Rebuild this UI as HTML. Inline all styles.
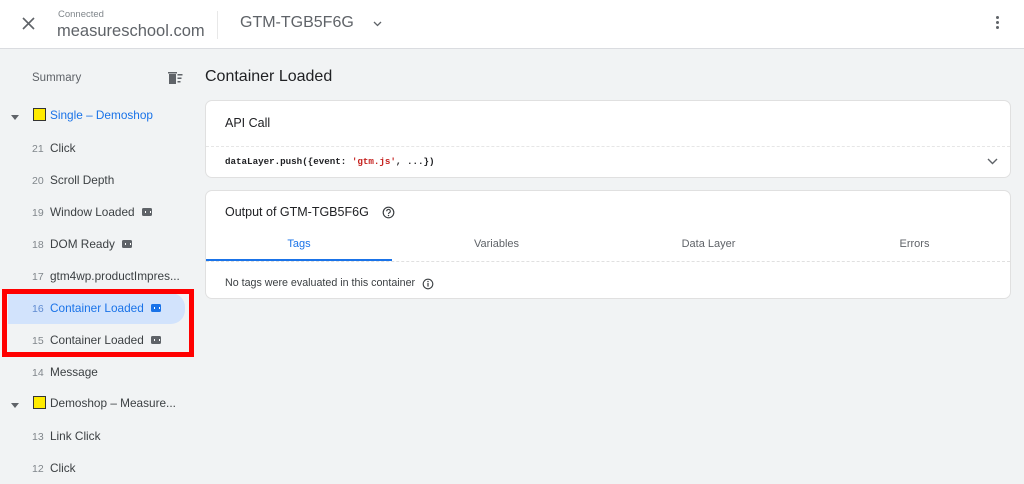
<!DOCTYPE html>
<html><head><meta charset="utf-8"><style>
*{box-sizing:border-box;margin:0;padding:0}
body{width:1024px;height:484px;overflow:hidden;background:#f1f3f4;font-family:"Liberation Sans",Arial,sans-serif;color:#3c4043;position:relative}
.hdr{position:absolute;left:0;top:0;width:1024px;height:49px;background:#fff;border-bottom:1px solid #dadce0}
.abs{position:absolute;white-space:nowrap}
.item{position:absolute;left:32px;font-size:11.8px;color:#5f6368;white-space:nowrap}
.item .n{color:#80868b;font-size:10.5px;display:inline-block;width:18px}
.item .t{color:#3c4043}
.badge{display:inline-block;width:10px;height:8px;background:#5f6368;border-radius:1.5px;vertical-align:middle;margin-left:7px;position:relative;top:-1px}
.badge:after{content:"";position:absolute;left:3px;top:3px;width:4px;height:2px;border-left:1px solid #fff;border-right:1px solid #fff}
.card{position:absolute;left:205px;width:806px;background:#fff;border:1px solid #e0e0e0;border-radius:7px}
.sq{display:inline-block;width:13px;height:13px;background:#ffeb00;border:1px solid #333;vertical-align:middle;margin-right:4px;position:relative;top:-1px}
.tri{position:absolute;left:11px;width:0;height:0;border-left:4px solid transparent;border-right:4px solid transparent;border-top:5px solid #5f6368}
</style></head><body>
<div class="hdr">
  <svg class="abs" style="left:22px;top:17px" width="13" height="13" viewBox="0 0 13 13"><path d="M1 1L12 12M12 1L1 12" stroke="#5f6368" stroke-width="1.6"/></svg>
  <div class="abs" style="left:58px;top:9px;font-size:9.5px;color:#80868b">Connected</div>
  <div class="abs" style="left:57px;top:22px;font-size:16.5px;color:#5f6368">measureschool.com</div>
  <div class="abs" style="left:217px;top:11px;width:1px;height:28px;background:#e8e8e8"></div>
  <div class="abs" style="left:240px;top:14px;font-size:16px;color:#5f6368">GTM-TGB5F6G</div>
  <svg class="abs" style="left:373px;top:21px" width="9" height="6" viewBox="0 0 9 6"><path d="M1 1L4.5 4.5L8 1" stroke="#5f6368" stroke-width="1.3" fill="none"/></svg>
  <div class="abs" style="left:996px;top:16px;width:3px;height:3px;background:#5f6368;border-radius:50%;box-shadow:0 5px 0 #5f6368,0 10px 0 #5f6368"></div>
</div>

<div class="abs" style="left:32px;top:72px;font-size:11.5px;color:#5f6368">Summary</div>
<svg class="abs" style="left:167px;top:71px" width="18" height="14" viewBox="0 0 18 14"><rect x="2" y="3" width="7" height="10" fill="#5f6368"/><rect x="1" y="1" width="9" height="1.5" fill="#5f6368"/><rect x="10.5" y="3" width="5" height="1.5" fill="#5f6368"/><rect x="10.5" y="6.5" width="4" height="1.5" fill="#5f6368"/><rect x="10.5" y="10" width="3" height="1.5" fill="#5f6368"/></svg>

<div class="tri" style="top:115px"></div>
<div class="abs" style="left:33px;top:108px;font-size:11.8px;color:#1a73e8"><span class="sq"></span>Single – Demoshop</div>

<div class="item" style="top:141px"><span class="n">21</span><span class="t">Click</span></div>
<div class="item" style="top:173px"><span class="n">20</span><span class="t">Scroll Depth</span></div>
<div class="item" style="top:205px"><span class="n">19</span><span class="t">Window Loaded</span><span class="badge"></span></div>
<div class="item" style="top:237px"><span class="n">18</span><span class="t">DOM Ready</span><span class="badge"></span></div>
<div class="item" style="top:269px"><span class="n">17</span><span class="t">gtm4wp.productImpres...</span></div>
<div class="abs" style="left:8px;top:293px;width:177px;height:31px;background:#d2e3fc;border-radius:0 14px 14px 0"></div>
<div class="item" style="top:301px"><span class="n" style="color:#5f8bd1">16</span><span class="t" style="color:#1a73e8">Container Loaded</span><span class="badge" style="background:#1a73e8"></span></div>
<div class="item" style="top:333px"><span class="n">15</span><span class="t">Container Loaded</span><span class="badge"></span></div>
<div class="abs" style="left:2px;top:289px;width:192px;height:68px;border:5px solid #f00"></div>
<div class="item" style="top:365px"><span class="n">14</span><span class="t">Message</span></div>
<div class="tri" style="top:403px"></div>
<div class="abs" style="left:33px;top:396px;font-size:11.8px;color:#3c4043"><span class="sq"></span>Demoshop – Measure...</div>
<div class="item" style="top:429px"><span class="n">13</span><span class="t">Link Click</span></div>
<div class="item" style="top:461px"><span class="n">12</span><span class="t">Click</span></div>

<div class="abs" style="left:205px;top:68px;font-size:16px;color:#202124">Container Loaded</div>

<div class="card" style="top:100px;height:78px">
  <div class="abs" style="left:19px;top:15px;font-size:12.5px;color:#202124">API Call</div>
  <div class="abs" style="left:0;top:45px;width:804px;border-top:1px dashed #e6e6e6"></div>
  <div class="abs" style="left:19px;top:55px;font-family:'Liberation Mono',monospace;font-size:9.2px;font-weight:bold;color:#202124">dataLayer.push({event: <span style="color:#c5221f">'gtm.js'</span>, ...})</div>
  <svg class="abs" style="left:781px;top:57px" width="11" height="7" viewBox="0 0 11 7"><path d="M1 1L5.5 5.5L10 1" stroke="#5f6368" stroke-width="1.4" fill="none"/></svg>
</div>

<div class="card" style="top:190px;height:109px">
  <div class="abs" style="left:19px;top:14px;font-size:12.5px;color:#202124">Output of GTM-TGB5F6G</div>
  <svg class="abs" style="left:176px;top:15px" width="13" height="13" viewBox="0 0 13 13"><circle cx="6.5" cy="6.5" r="5.3" stroke="#3c4043" stroke-width="1.2" fill="none"/><path d="M4.7 5.2a1.8 1.8 0 1 1 2.6 1.6c-.6.3-.8.6-.8 1.2" stroke="#3c4043" stroke-width="1.1" fill="none"/><circle cx="6.5" cy="9.6" r=".7" fill="#3c4043"/></svg>
  <div class="abs" style="left:0;top:47px;width:186px;text-align:center;font-size:11px;color:#1a73e8">Tags</div>
  <div class="abs" style="left:190px;top:47px;width:201px;text-align:center;font-size:11px;color:#5f6368">Variables</div>
  <div class="abs" style="left:402px;top:47px;width:201px;text-align:center;font-size:11px;color:#5f6368">Data Layer</div>
  <div class="abs" style="left:608px;top:47px;width:201px;text-align:center;font-size:11px;color:#5f6368">Errors</div>
  <div class="abs" style="left:0;top:70px;width:804px;border-top:1px dashed #e0e0e0"></div>
  <div class="abs" style="left:0;top:68px;width:186px;height:2px;background:#1a73e8"></div>
  <div class="abs" style="left:19px;top:86px;font-size:10.7px;color:#3c4043">No tags were evaluated in this container</div>
  <svg class="abs" style="left:216px;top:87px" width="12" height="12" viewBox="0 0 12 12"><circle cx="6" cy="6" r="4.8" stroke="#3c4043" stroke-width="1.1" fill="none"/><rect x="5.4" y="5" width="1.2" height="3.6" fill="#3c4043"/><circle cx="6" cy="3.6" r=".7" fill="#3c4043"/></svg>
</div>
</body></html>
